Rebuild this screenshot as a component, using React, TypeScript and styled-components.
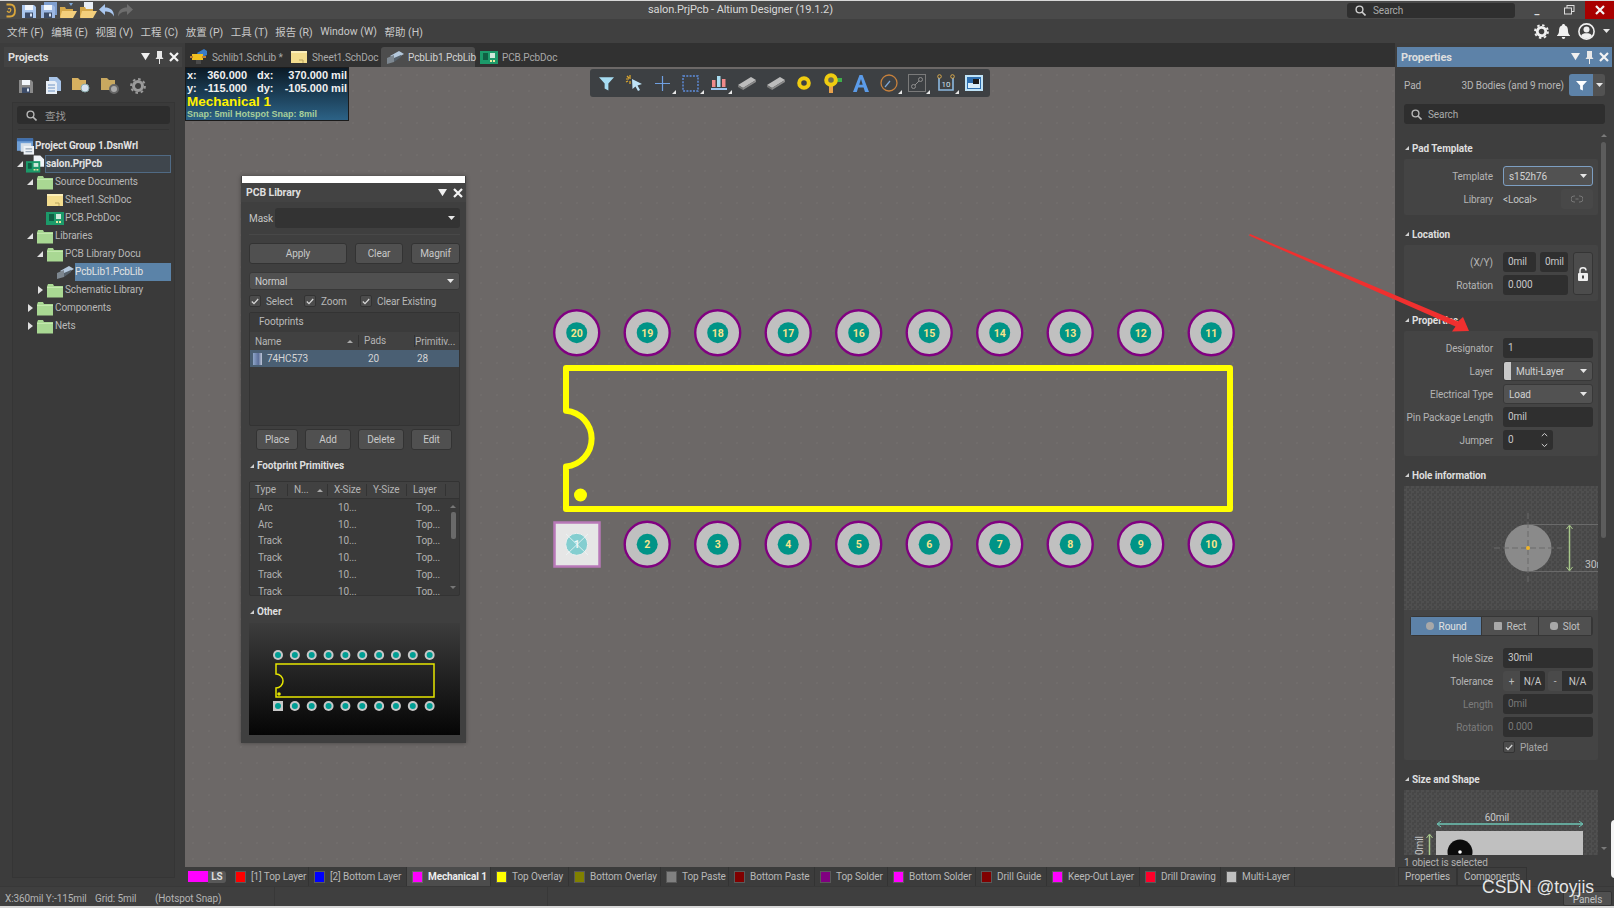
import { FC, ReactNode } from 'react';
import styled, { createGlobalStyle } from 'styled-components';

const FONT = `Roboto, "Noto Sans CJK SC", "Liberation Sans", sans-serif`;

const GlobalSC = createGlobalStyle`
  html, body { margin: 0; padding: 0; background: #d8d8d8; }
  body { font-family: ${FONT}; font-size: 10px; letter-spacing: -0.1px; color: #c4c4c4; }
  * { box-sizing: border-box; }
`;

// ---- small drawings ----
const Tri: FC<{ size?: number; color?: string }> = ({ size = 9, color = '#f0f0f0' }) => (
  <svg width={size} height={size * 0.8} viewBox="0 0 10 8"><path d="M0 0H10L5 8Z" fill={color} /></svg>
);
const Pin: FC = () => (
  <svg width="9" height="13" viewBox="0 0 9 13"><path d="M2 0H7V6L8.5 8H5V13H4V8H.5L2 6Z" fill="#e8e8e8" /></svg>
);
const CloseX: FC = () => (
  <svg width="10" height="10" viewBox="0 0 10 10"><path d="M1 1L9 9M9 1L1 9" stroke="#f4f4f4" strokeWidth="2.2" /></svg>
);
const Loupe: FC<{ color?: string }> = ({ color = '#b8b8b8' }) => (
  <svg width="11" height="11" viewBox="0 0 11 11" fill="none"><circle cx="4.5" cy="4.5" r="3.4" stroke={color} strokeWidth="1.4" /><path d="M7 7L10.5 10.5" stroke={color} strokeWidth="1.6" /></svg>
);
const Caret: FC = () => (
  <svg width="7" height="4" viewBox="0 0 7 4"><path d="M0 0H7L3.5 4Z" fill="#e6e6e6" /></svg>
);
const Tick: FC = () => (
  <svg width="8" height="7" viewBox="0 0 8 7" fill="none"><path d="M.8 3.5L3 5.7L7.2 1" stroke="#d8d8d8" strokeWidth="1.2" /></svg>
);
const SortUp: FC = () => (
  <svg width="6" height="3" viewBox="0 0 6 3"><path d="M0 3H6L3 0Z" fill="#aaa" /></svg>
);
const FilterGlyph: FC<{ size?: number; color?: string }> = ({ size = 12, color = '#fff' }) => (
  <svg width={size} height={size} viewBox="0 0 12 12"><path d="M0 1H12L7.5 6V11.5L4.5 10V6Z" fill={color} /></svg>
);

const Folder: FC = () => (
  <svg width="18" height="15" viewBox="0 0 18 15"><path d="M1 3.5L2 1H7L8 3H17V14.500H1Z" fill="#a9d893" /><path d="M1 4H17V5H1Z" fill="#c3e8ae" /></svg>
);
const SchDocIcon: FC = () => (
  <svg width="18" height="14" viewBox="0 0 18 14"><rect x="1" y="1" width="16" height="12" fill="#f3dd8e" /><rect x="1" y="1" width="16" height="2" fill="#fbeeb9" /><path d="M9 10H13V13" stroke="#b9a45e" fill="none" /></svg>
);
const PcbDocIcon: FC = () => (
  <svg width="18" height="14" viewBox="0 0 18 14"><rect x="0" y="1" width="18" height="13" fill="#1c9a6a" /><rect x="3" y="3" width="5" height="7" fill="#0f5f43" /><rect x="10" y="3" width="5" height="5" fill="#cfe9db" /><path d="M10 11H16" stroke="#e7e7a0" strokeWidth="2" strokeDasharray="2 1" /></svg>
);
const PcbLibIcon: FC = () => (
  <svg width="18" height="15" viewBox="0 0 18 15"><path d="M4 6L13 1L18 4L9 9Z" fill="#b4c8dc" /><path d="M1 8L8 5L8 12L1 14Z" fill="#7d8790" /><path d="M8 8L15 5V7L8 12Z" fill="#56616b" /></svg>
);
const ProjectIcon: FC = () => (
  <svg width="20" height="18" viewBox="0 0 20 18"><path d="M8 0H15L19 4V12H8Z" fill="#f0f4f8" /><rect x="0" y="6" width="15" height="12" fill="#1c9a6a" /><rect x="2" y="8" width="4" height="6" fill="#0f5f43" /><rect x="8" y="8" width="5" height="4" fill="#cfe9db" /><path d="M8 15H14" stroke="#e7e7a0" strokeWidth="1.600" strokeDasharray="2 1" /></svg>
);
const GroupIcon: FC = () => (
  <svg width="20" height="19" viewBox="0 0 20 19"><rect x="1" y="1" width="17" height="13" fill="#6f9fd6" /><rect x="1" y="1" width="17" height="3" fill="#3e6fb0" /><rect x="5" y="6" width="11" height="9" fill="#d6dfe8" /><rect x="8" y="9" width="11" height="9" fill="#eef2f6" /><path d="M10 12H17M10 15H17" stroke="#7d8ea0" /></svg>
);
const SchLibIcon: FC = () => (
  <svg width="18" height="16" viewBox="0 0 18 16"><path d="M7 4L14 0L17 2V6L10 9Z" fill="#3a7cc8" /><rect x="2" y="5" width="11" height="6" fill="#f0c020" /><path d="M0 8H3M12 8H16" stroke="#c08030" strokeWidth="2" /><rect x="6" y="11" width="5" height="4" fill="#4a4a4a" /></svg>
);
const SaveIcon: FC<{ color?: string; double?: boolean }> = ({ color = '#a9c6ee', double }) => (
  <svg width="17" height="17" viewBox="0 0 17 17">
    {double && <rect x="4" y="0" width="13" height="13" fill="#7f9fd0" />}
    <path d="M1 3H13L15 5V16H1Z" fill={color} />
    <rect x="4" y="3" width="8" height="5" fill="#f2f6fb" />
    <rect x="4" y="10.500" width="8" height="5.500" fill="#3d4c68" />
    <rect x="9" y="11.500" width="2" height="3" fill="#d8e2f0" />
  </svg>
);
const OpenIcon: FC<{ paper?: boolean }> = ({ paper }) => (
  <svg width="18" height="17" viewBox="0 0 18 17">
    {paper && <path d="M5 0H14V8H5Z" fill="#e8eef6" />}
    <path d="M1 5H6L7 7H14V15H1Z" fill="#d6a84a" />
    <path d="M3 9H18L14 16H1Z" fill="#f4cf7c" />
    {!paper && <path d="M10 1L14 1L12 4Z" fill="#7fa8d8" />}
  </svg>
);
const Undo: FC<{ color: string; flip?: boolean }> = ({ color, flip }) => (
  <svg width="16" height="13" viewBox="0 0 16 13" style={flip ? { transform: 'scaleX(-1)' } : undefined}>
    <path d="M6 0V3.500C11 3.500 15 6 15 12.500C13 8.500 10 7.500 6 7.500V11L0 5.500Z" fill={color} />
  </svg>
);
const AppLogo: FC = () => (
  <svg width="11" height="15" viewBox="0 0 11 15" fill="none"><path d="M1.500 1.500H5C9 1.500 10 4 10 7.500C10 11 9 13.500 5 13.500H1.500" stroke="#d9a63c" strokeWidth="1.800" /><path d="M3 6C5 4.500 6.500 6 5.500 8S3.500 9.500 2 8" stroke="#d9a63c" strokeWidth="1.300" /></svg>
);
const Gear: FC<{ color?: string; size?: number }> = ({ color = '#f0f0f0', size = 15 }) => (
  <svg width={size} height={size} viewBox="0 0 16 16"><circle cx="8" cy="8" r="4.500" fill="none" stroke={color} strokeWidth="3" /><circle cx="8" cy="8" r="6.900" fill="none" stroke={color} strokeWidth="2" strokeDasharray="2.600 2.800" /></svg>
);
const Bell: FC = () => (
  <svg width="13" height="15" viewBox="0 0 13 15"><path d="M6.500 0C7.500 0 8 .6 8 1.500C10.500 2.300 11 4.500 11 7C11 9 12 10.500 13 11.500V12H0V11.500C1 10.500 2 9 2 7C2 4.500 2.500 2.300 5 1.500C5 .6 5.500 0 6.500 0Z" fill="#f0f0f0" /><path d="M4.800 13H8.200C8.200 14 7.500 15 6.500 15S4.800 14 4.800 13Z" fill="#f0f0f0" /></svg>
);
const UserIcon: FC = () => (
  <svg width="17" height="17" viewBox="0 0 17 17"><circle cx="8.500" cy="8.500" r="7.600" fill="none" stroke="#f0f0f0" strokeWidth="1.600" /><circle cx="8.500" cy="6.500" r="3" fill="#f0f0f0" /><path d="M3 13C4 10.800 6 10.300 8.500 10.300S13 10.800 14 13C12.500 14.700 10.500 15.500 8.500 15.500S4.500 14.700 3 13Z" fill="#f0f0f0" /></svg>
);
const Lock: FC = () => (
  <svg width="10" height="14" viewBox="0 0 10 14"><path d="M2 6V3.500C2 1.800 3.300.8 5 .8S8 1.800 8 3.500" fill="none" stroke="#efefef" strokeWidth="1.500" /><rect x="0" y="6" width="10" height="8" rx="1" fill="#efefef" /><rect x="4" y="8.500" width="2" height="3" fill="#444" /></svg>
);

const ChipIcon: FC = () => (
  <svg width="20" height="14" viewBox="0 0 20 14"><path d="M1 9L14 1L19 4L6 12Z" fill="#bcbcbc" /><path d="M1 9L6 12V14L1 11Z" fill="#777" /><path d="M6 12L19 4V6L6 14Z" fill="#8a8a8a" /></svg>
);

const TOOL_ICONS: ReactNode[] = [
  <FilterGlyph size={15} color="#a6dcf2" />,
  <svg width="18" height="18" viewBox="0 0 18 18"><path d="M7 5L17 10L12.500 11.500L15 16L13 17L10.500 12.500L7.500 15Z" fill="#bfe3f7" /><path d="M5 1V5M1 5H4M2 2L4 4M1 8L3 7M5 7V10" stroke="#e0a92e" strokeWidth="1.200" /></svg>,
  <svg width="15" height="15" viewBox="0 0 15 15"><path d="M7.500 0V15M0 7.500H15" stroke="#6f9fe0" strokeWidth="1.200" /></svg>,
  <svg width="17" height="17" viewBox="0 0 17 17"><rect x="1" y="1" width="15" height="15" fill="none" stroke="#5f8fe0" strokeWidth="1.400" strokeDasharray="2 1.300" /></svg>,
  <svg width="16" height="16" viewBox="0 0 16 16"><rect x="1" y="5" width="3.500" height="7" fill="#f08a8a" /><rect x="6" y="1" width="3.500" height="11" fill="#a8dcf0" /><rect x="11" y="4" width="3.500" height="8" fill="#f08a8a" /><rect x="0" y="13" width="16" height="2" fill="#9cc4ee" /></svg>,
  <ChipIcon />,
  <ChipIcon />,
  <svg width="14" height="14" viewBox="0 0 14 14"><circle cx="7" cy="7" r="4.800" fill="none" stroke="#f0cc10" strokeWidth="4" /></svg>,
  <svg width="19" height="20" viewBox="0 0 19 20"><rect x="6" y="11" width="4" height="9" fill="#e8a24c" /><rect x="11" y="5" width="8" height="4" fill="#3fae4a" /><circle cx="8" cy="7" r="4.800" fill="#6a6a50" stroke="#f0cc10" strokeWidth="4" /></svg>,
  <svg width="16" height="17" viewBox="0 0 16 17"><path d="M6.500 0H9.500L16 17H12L10.600 12.500H5.200L3.800 17H0ZM6.200 9.800H9.700L8 4Z" fill="#5b9be8" /></svg>,
  <svg width="18" height="18" viewBox="0 0 18 18" fill="none"><circle cx="9" cy="9" r="8" stroke="#c8813c" strokeWidth="1.300" /><path d="M5 13L10 7" stroke="#7fa8d8" strokeWidth="1.200" /></svg>,
  <svg width="18" height="18" viewBox="0 0 18 18" fill="none"><rect x=".5" y=".5" width="17" height="17" stroke="#7a7a7a" /><circle cx="5.500" cy="12.500" r="2" stroke="#8e8e8e" /><circle cx="12.500" cy="5.500" r="2" stroke="#8e8e8e" /><path d="M7 11L11 7" stroke="#8e8e8e" /></svg>,
  <svg width="18" height="18" viewBox="0 0 18 18" fill="none"><path d="M2 4V16H16V4" stroke="#8cb8e0" strokeWidth="1.600" /><circle cx="2.500" cy="2.500" r="1.800" stroke="#d8a84c" /><circle cx="15.500" cy="2.500" r="1.800" stroke="#d8a84c" /><text x="9" y="13" fontSize="8" fill="#cfe0ee" textAnchor="middle" fontFamily="Roboto">10</text></svg>,
  <svg width="18" height="16" viewBox="0 0 18 16"><rect width="18" height="16" fill="#bfe3f7" /><rect x="2" y="2" width="14" height="12" fill="#2e6fb0" /><path d="M3 13V8H9V4H15V13Z" fill="#d8eefb" /><rect x="8" y="4" width="6" height="5" fill="#1d1d1d" /></svg>,
];

// ---- data ----
type DocKind = 'group' | 'prj' | 'folder' | 'sch' | 'pcb' | 'lib';
const KIND_ICON: Record<DocKind, ReactNode> = {
  group: <GroupIcon />, prj: <ProjectIcon />, folder: <Folder />, sch: <SchDocIcon />, pcb: <PcbDocIcon />, lib: <PcbLibIcon />,
};
const tree: { name: string; level: number; kind: DocKind; twisty?: 'open' | 'closed'; sel?: 'dim' | 'blue'; bold?: boolean }[] = [
  { name: 'Project Group 1.DsnWrl', level: 0, kind: 'group', bold: true },
  { name: 'salon.PrjPcb', level: 1, kind: 'prj', twisty: 'open', sel: 'dim', bold: true },
  { name: 'Source Documents', level: 2, kind: 'folder', twisty: 'open' },
  { name: 'Sheet1.SchDoc', level: 3, kind: 'sch' },
  { name: 'PCB.PcbDoc', level: 3, kind: 'pcb' },
  { name: 'Libraries', level: 2, kind: 'folder', twisty: 'open' },
  { name: 'PCB Library Docu', level: 3, kind: 'folder', twisty: 'open' },
  { name: 'PcbLib1.PcbLib', level: 4, kind: 'lib', sel: 'blue' },
  { name: 'Schematic Library', level: 3, kind: 'folder', twisty: 'closed' },
  { name: 'Components', level: 2, kind: 'folder', twisty: 'closed' },
  { name: 'Nets', level: 2, kind: 'folder', twisty: 'closed' },
];

const docTabs: { name: string; icon: ReactNode; width: number; active?: boolean }[] = [
  { name: 'Schlib1.SchLib *', icon: <SchLibIcon />, width: 100 },
  { name: 'Sheet1.SchDoc', icon: <SchDocIcon />, width: 96 },
  { name: 'PcbLib1.PcbLib', icon: <PcbLibIcon />, width: 94, active: true },
  { name: 'PCB.PcbDoc', icon: <PcbDocIcon />, width: 90 },
];

const layers = [
  { name: '[1] Top Layer', color: '#ff0000', w: 79 },
  { name: '[2] Bottom Layer', color: '#0000ff', w: 98 },
  { name: 'Mechanical 1', color: '#ff00ff', w: 84, active: true },
  { name: 'Top Overlay', color: '#ffff00', w: 78 },
  { name: 'Bottom Overlay', color: '#808000', w: 92 },
  { name: 'Top Paste', color: '#808080', w: 68 },
  { name: 'Bottom Paste', color: '#800000', w: 86 },
  { name: 'Top Solder', color: '#800080', w: 73 },
  { name: 'Bottom Solder', color: '#ff00ff', w: 88 },
  { name: 'Drill Guide', color: '#800000', w: 71 },
  { name: 'Keep-Out Layer', color: '#ff00ff', w: 93 },
  { name: 'Drill Drawing', color: '#ff002a', w: 81 },
  { name: 'Multi-Layer', color: '#c0c0c0', w: 74 },
];

const menu = ['文件 (F)', '编辑 (E)', '视图 (V)', '工程 (C)', '放置 (P)', '工具 (T)', '报告 (R)', 'Window (W)', '帮助 (H)'];
const primitives = ['Arc', 'Arc', 'Track', 'Track', 'Track', 'Track'];

const PAD_X = (i: number) => 576.7 + i * 70.5;
const MINI_X = (i: number) => 278 + i * 16.85;

const App: FC = () => (
  <PageSC>
    <GlobalSC />
    <TitleBarSC>
      <QuickIconsSC>
        <AppLogo />
        <SaveIcon />
        <SaveIcon double color="#9db8e4" />
        <OpenIcon />
        <OpenIcon paper />
        <Undo color="#a9c6ee" />
        <Undo color="#6e6e6e" flip />
      </QuickIconsSC>
      <TitleTextSC>salon.PrjPcb - Altium Designer (19.1.2)</TitleTextSC>
      <GlobalSearchSC><Loupe color="#d0d0d0" /><span>Search</span></GlobalSearchSC>
      <WinButtonSC>_</WinButtonSC>
      <WinButtonSC>
        <svg width="11" height="10" viewBox="0 0 11 10" fill="none"><rect x="3" y=".5" width="7" height="6" stroke="#ddd" /><rect x=".5" y="3" width="7" height="6" fill="#4a4a4a" stroke="#ddd" /></svg>
      </WinButtonSC>
      <WinCloseSC><CloseX /></WinCloseSC>
    </TitleBarSC>

    <MenuBarSC>
      {menu.map(m => <MenuItemSC key={m}>{m}</MenuItemSC>)}
      <MenuRightSC>
        <Gear />
        <Bell />
        <UserIcon />
        <Caret />
      </MenuRightSC>
    </MenuBarSC>

    <MainSC>
      <LeftPanelSC>
        <PanelHeadSC>
          <PanelTitleSC>Projects</PanelTitleSC>
          <Tri />
          <Pin />
          <CloseX />
        </PanelHeadSC>
        <ProjectToolsSC>
          <SaveIcon color="#8a8a8a" />
          <svg width="15" height="17" viewBox="0 0 15 17"><path d="M3 0H11L15 4V14H3Z" fill="#a8c4e8" /><path d="M0 4H9L11 6V17H0Z" fill="#e8eef6" /><path d="M2 8H9M2 11H9M2 14H9" stroke="#6f94c4" /></svg>
          <svg width="18" height="17" viewBox="0 0 18 17"><path d="M0 1H6L8 3H14V13H0Z" fill="#d6b060" /><circle cx="13" cy="11" r="4" fill="#d8e4f0" stroke="#8aa" /></svg>
          <svg width="18" height="17" viewBox="0 0 18 17"><path d="M0 1H6L8 3H14V13H0Z" fill="#c8a860" /><circle cx="13" cy="12" r="4" fill="#aaa" stroke="#666" strokeWidth="2" /></svg>
          <Gear color="#9a9a9a" size={16} />
        </ProjectToolsSC>
        <TreeAreaSC>
          <PanelSearchSC><Loupe /><span>查找</span></PanelSearchSC>
          <TreeDividerSC />
          <TreeSC>
            {tree.map(n => (
              <TreeRowSC key={n.name} $level={n.level}>
                {n.level > 0 && (
                  <TwistySC>
                    {n.twisty === 'open' && <svg width="6" height="6" viewBox="0 0 6 6"><path d="M6 0V6H0Z" fill="#e0e0e0" /></svg>}
                    {n.twisty === 'closed' && <svg width="5" height="8" viewBox="0 0 5 8"><path d="M0 0L5 4L0 8Z" fill="#e0e0e0" /></svg>}
                  </TwistySC>
                )}
                <TreeIconSC>{KIND_ICON[n.kind]}</TreeIconSC>
                <TreeNameSC $sel={n.sel} $bold={n.bold}>{n.name}</TreeNameSC>
              </TreeRowSC>
            ))}
          </TreeSC>
        </TreeAreaSC>
      </LeftPanelSC>

      <CenterSC>
        <DocTabsSC>
          {docTabs.map(t => (
            <DocTabSC key={t.name} $active={t.active} $w={t.width}>{t.icon}<span>{t.name}</span></DocTabSC>
          ))}
        </DocTabsSC>

        <CanvasSC>
          <BoardSvgSC viewBox="185 67 1210 800">
            {[20, 19, 18, 17, 16, 15, 14, 13, 12, 11].map((num, i) => (
              <g key={num}>
                <circle cx={PAD_X(i)} cy={332.700} r={22.500} fill="#c0c0c0" stroke="#800080" strokeWidth={2.400} />
                <circle cx={PAD_X(i)} cy={332.700} r={10.500} fill="#009487" />
                <PadTextSC x={PAD_X(i)} y={336.500} textAnchor="middle">{num}</PadTextSC>
              </g>
            ))}
            <rect x={554.500} y={522.500} width={45} height={44} fill="#e6e6e6" stroke="#b878b8" strokeWidth={2.500} />
            <circle cx={576.700} cy={544.300} r={11} fill="#84ced0" stroke="#f0f0f0" strokeWidth={1} />
            <path d="M566 534L588 555M588 534L566 555" stroke="#eef6f6" strokeWidth={0.800} />
            <PadTextSC x={576.700} y={548} textAnchor="middle" $light>1</PadTextSC>
            {[2, 3, 4, 5, 6, 7, 8, 9, 10].map((num, i) => (
              <g key={num}>
                <circle cx={PAD_X(i + 1)} cy={544.300} r={22.500} fill="#c0c0c0" stroke="#800080" strokeWidth={2.400} />
                <circle cx={PAD_X(i + 1)} cy={544.300} r={10.500} fill="#009487" />
                <PadTextSC x={PAD_X(i + 1)} y={548} textAnchor="middle">{num}</PadTextSC>
              </g>
            ))}
            <path d="M566 368H1230V509H566V466.500A28 28 0 0 0 566 410.700Z" fill="none" stroke="#ffff00" strokeWidth={6} strokeLinejoin="round" />
            <circle cx={580.500} cy={495} r={6.500} fill="#ffff00" />
          </BoardSvgSC>

          <HudSC>
            <HudCoordsSC>
              <span>x:</span><HudNumSC>360.000</HudNumSC><HudKeySC>dx:</HudKeySC><HudNumSC>370.000 mil</HudNumSC>
              <span>y:</span><HudNumSC>-115.000</HudNumSC><HudKeySC>dy:</HudKeySC><HudNumSC>-105.000 mil</HudNumSC>
            </HudCoordsSC>
            <HudLayerSC>Mechanical 1</HudLayerSC>
            <HudSnapSC>Snap: 5mil Hotspot Snap: 8mil</HudSnapSC>
          </HudSC>

          <ToolbarSC>
            {TOOL_ICONS.map((icon, i) => (
              <ToolButtonSC key={i} $corner={[2, 3, 4, 10, 11, 12].includes(i)}>{icon}</ToolButtonSC>
            ))}
          </ToolbarSC>

          <LibraryPanelSC>
            <LibraryStripSC />
            <PanelHeadSC $flat>
              <PanelTitleSC $small>PCB Library</PanelTitleSC>
              <Tri />
              <CloseX />
            </PanelHeadSC>
            <LibraryBodySC>
              <MaskRowSC>
                <MaskLabelSC>Mask</MaskLabelSC>
                <MaskInputSC><Caret /></MaskInputSC>
              </MaskRowSC>
              <LibDividerSC />
              <ButtonRowSC>
                <LibButtonSC $w={98}>Apply</LibButtonSC>
                <LibButtonSC $w={48}>Clear</LibButtonSC>
                <LibButtonSC $w={49}>Magnif</LibButtonSC>
              </ButtonRowSC>
              <NormalSelectSC><span>Normal</span><Caret /></NormalSelectSC>
              <CheckRowSC>
                <CheckSC $w={55}><CheckBoxSC><Tick /></CheckBoxSC>Select</CheckSC>
                <CheckSC $w={56}><CheckBoxSC><Tick /></CheckBoxSC>Zoom</CheckSC>
                <CheckSC><CheckBoxSC><Tick /></CheckBoxSC>Clear Existing</CheckSC>
              </CheckRowSC>

              <FootprintsSC>
                <FootprintsTitleSC>Footprints</FootprintsTitleSC>
                <FootHeadSC>
                  <span>Name</span>
                  <SortCellSC><SortUp /></SortCellSC>
                  <PadsHeadSC>Pads</PadsHeadSC>
                  <span>Primitiv...</span>
                </FootHeadSC>
                <FootRowSC>
                  <ChipMarkSC />
                  <span>74HC573</span>
                  <span>20</span>
                  <span>28</span>
                </FootRowSC>
              </FootprintsSC>

              <ActionRowSC>
                <LibButtonSC $w={42}>Place</LibButtonSC>
                <LibButtonSC $w={46}>Add</LibButtonSC>
                <LibButtonSC $w={46}>Delete</LibButtonSC>
                <LibButtonSC $w={41}>Edit</LibButtonSC>
              </ActionRowSC>

              <SectionHeadSC $tall={31}><HeadTriSC />Footprint Primitives</SectionHeadSC>
              <PrimTableSC>
                <PrimHeadSC>
                  <span>Type</span>
                  <PrimSortSC>N...<SortUp /></PrimSortSC>
                  <span>X-Size</span>
                  <span>Y-Size</span>
                  <span>Layer</span>
                </PrimHeadSC>
                {primitives.map((p, i) => (
                  <PrimRowSC key={i}><span>{p}</span><span /><span>10...</span><span /><span>Top...</span></PrimRowSC>
                ))}
                <PrimScrollSC />
              </PrimTableSC>

              <SectionHeadSC $tall={27} $drop={4}><HeadTriSC />Other</SectionHeadSC>
              <MiniPreviewSC>
                <svg width="210" height="112" viewBox="249 623 210 112">
                  {Array.from({ length: 10 }).map((_, i) => (
                    <g key={i}>
                      <circle cx={MINI_X(i)} cy={655} r={5} fill="#c8c8c8" />
                      <circle cx={MINI_X(i)} cy={655} r={3} fill="#009e94" />
                      {i === 0
                        ? <rect x={273} y={701} width={10} height={10} fill="#c8c8c8" />
                        : <circle cx={MINI_X(i)} cy={706} r={5} fill="#c8c8c8" />}
                      <circle cx={MINI_X(i)} cy={706} r={3} fill="#009e94" />
                    </g>
                  ))}
                  <path d="M276 664H434V697H276V688A6.500 6.500 0 0 0 276 674Z" fill="none" stroke="#e6e600" strokeWidth={1.500} />
                  <circle cx={279} cy={694} r={1.800} fill="#e6e600" />
                </svg>
              </MiniPreviewSC>
            </LibraryBodySC>
          </LibraryPanelSC>
        </CanvasSC>

        <LayerBarSC>
          <LayerSwatchBigSC />
          <LsTagSC>LS</LsTagSC>
          {layers.map(l => (
            <LayerTabSC key={l.name} $w={l.w} $active={l.active}>
              <LayerChipSC $color={l.color} />
              <span>{l.name}</span>
            </LayerTabSC>
          ))}
        </LayerBarSC>
      </CenterSC>

      <RightPanelSC>
        <PanelHeadSC $blue>
          <PanelTitleSC>Properties</PanelTitleSC>
          <Tri />
          <Pin />
          <CloseX />
        </PanelHeadSC>
        <SelectionRowSC>
          <span>Pad</span>
          <SelectionHintSC>3D Bodies (and 9 more)</SelectionHintSC>
          <FilterBtnSC><FilterGlyph size={11} /></FilterBtnSC>
          <FilterCaretSC><Caret /></FilterCaretSC>
        </SelectionRowSC>
        <PropSearchSC><Loupe /><span>Search</span></PropSearchSC>

        <PropScrollSC>
          <SectionHeadSC $tall={22}><HeadTriSC />Pad Template</SectionHeadSC>
          <GroupSC>
            <FieldSC><label>Template</label><SelectSC $focus><span>s152h76</span><Caret /></SelectSC></FieldSC>
            <FieldSC>
              <label>Library</label>
              <LibraryValueSC>
                <span>&lt;Local&gt;</span>
                <LinkBtnSC>
                  <svg width="12" height="8" viewBox="0 0 12 8" fill="none"><path d="M4 1H3A3 3 0 0 0 3 7H4M8 1H9A3 3 0 0 1 9 7H8M4.500 4H7.500" stroke="#777" /></svg>
                </LinkBtnSC>
              </LibraryValueSC>
            </FieldSC>
          </GroupSC>

          <SectionHeadSC $tall={22} $gap={8}><HeadTriSC />Location</SectionHeadSC>
          <GroupSC>
            <LocationWrapSC>
              <LocationRowsSC>
                <FieldSC $compact>
                  <label>(X/Y)</label>
                  <PairSC><InputSC $w={33}>0mil</InputSC><InputSC $w={28}>0mil</InputSC></PairSC>
                </FieldSC>
                <FieldSC $compact><label>Rotation</label><InputSC $w={65}>0.000</InputSC></FieldSC>
              </LocationRowsSC>
              <LockBtnSC><Lock /></LockBtnSC>
            </LocationWrapSC>
          </GroupSC>

          <SectionHeadSC $tall={22} $gap={8}><HeadTriSC />Properties</SectionHeadSC>
          <GroupSC>
            <FieldSC><label>Designator</label><InputSC>1</InputSC></FieldSC>
            <FieldSC>
              <label>Layer</label>
              <SelectSC $chip><LayerTagSC /><span>Multi-Layer</span><Caret /></SelectSC>
            </FieldSC>
            <FieldSC><label>Electrical Type</label><SelectSC><span>Load</span><Caret /></SelectSC></FieldSC>
            <FieldSC><label>Pin Package Length</label><InputSC>0mil</InputSC></FieldSC>
            <FieldSC>
              <label>Jumper</label>
              <InputSC $w={50}>
                0
                <SpinnerSC>
                  <svg width="7" height="16" viewBox="0 0 7 16" fill="none"><path d="M.8 4L3.500 1.500L6.200 4M.8 12L3.500 14.500L6.200 12" stroke="#cfcfcf" /></svg>
                </SpinnerSC>
              </InputSC>
            </FieldSC>
          </GroupSC>

          <SectionHeadSC $tall={22} $gap={8}><HeadTriSC />Hole information</SectionHeadSC>
          <GroupSC $flush>
            <CheckerSC $h={124}>
              <svg width="194" height="124" viewBox="1404 486 194 124" fontFamily={FONT}>
                <circle cx={1528} cy={548} r={23.500} fill="#8a8a8a" />
                <path d="M1528 513V583M1494 548H1562" stroke="#6a6a6a" strokeDasharray="6 3" />
                <path d="M1528 524.500H1598M1528 571.500H1598" stroke="#6a6a6a" />
                <circle cx={1528} cy={548} r={2} fill="#f0b428" />
                <path d="M1569.500 526V570" stroke="#a8c88a" strokeWidth={1.500} />
                <path d="M1566.500 529L1569.500 525L1572.500 529M1566.500 567L1569.500 571L1572.500 567" stroke="#a8c88a" fill="none" />
                <text x={1585} y={568} fontSize={10.500} fill="#c0c0c0">30mil</text>
              </svg>
            </CheckerSC>
            <SegmentSC>
              <SegButtonSC $w={72} $active><SegDotSC $round />Round</SegButtonSC>
              <SegButtonSC $w={57}><SegDotSC />Rect</SegButtonSC>
              <SegButtonSC $w={54}><SegDotSC $round $soft />Slot</SegButtonSC>
            </SegmentSC>
            <HoleFieldsSC>
              <FieldSC><label>Hole Size</label><InputSC>30mil</InputSC></FieldSC>
              <FieldSC>
                <label>Tolerance</label>
                <ToleranceSC>
                  <TolSignSC>+</TolSignSC><TolValueSC>N/A</TolValueSC>
                  <TolSignSC>-</TolSignSC><TolValueSC>N/A</TolValueSC>
                </ToleranceSC>
              </FieldSC>
              <FieldSC $muted><label>Length</label><InputSC $muted>0mil</InputSC></FieldSC>
              <FieldSC $muted><label>Rotation</label><InputSC $muted>0.000</InputSC></FieldSC>
              <FieldSC $short>
                <span />
                <PlatedSC><CheckBoxSC><Tick /></CheckBoxSC>Plated</PlatedSC>
              </FieldSC>
            </HoleFieldsSC>
          </GroupSC>

          <SectionHeadSC $tall={22} $gap={8}><HeadTriSC />Size and Shape</SectionHeadSC>
          <CheckerSC $h={65}>
            <svg width="194" height="65" viewBox="1404 790 194 65" fontFamily={FONT}>
              <text x={1497} y={821} fontSize={10} fill="#c8c8c8" textAnchor="middle">60mil</text>
              <path d="M1438 824H1582" stroke="#6cc4b4" strokeWidth={1.500} />
              <path d="M1441 821L1437 824L1441 827M1579 821L1583 824L1579 827" stroke="#6cc4b4" fill="none" />
              <rect x={1436} y={831} width={147} height={30} fill="#c0c0c0" />
              <circle cx={1460} cy={852} r={12.500} fill="#0c0c0c" />
              <circle cx={1460} cy={852} r={1.800} fill="#fff" />
              <path d="M1429.500 835V855" stroke="#a8c88a" strokeWidth={1.500} />
              <path d="M1426.500 838L1429.500 834L1432.500 838" stroke="#a8c88a" fill="none" />
              <text transform="translate(1423 855) rotate(-90)" fontSize={10} fill="#c8c8c8">0mil</text>
            </svg>
          </CheckerSC>
        </PropScrollSC>

        <SelectedCountSC>1 object is selected</SelectedCountSC>
        <PanelTabsSC>
          <PanelTabSC>Properties</PanelTabSC>
          <PanelTabSC>Components</PanelTabSC>
        </PanelTabsSC>

        <PropArrowSC />
        <PropArrowSC $down />
        <PropScrollbarSC />
      </RightPanelSC>
    </MainSC>

    <StatusBarSC>
      <StatusCellSC $w={275}>
        <StatusTextSC $w={90}>X:360mil Y:-115mil</StatusTextSC>
        <StatusTextSC $w={60}>Grid: 5mil</StatusTextSC>
        <StatusTextSC>(Hotspot Snap)</StatusTextSC>
      </StatusCellSC>
      <StatusCellSC $w={273} />
      <PanelsBtnSC>Panels</PanelsBtnSC>
    </StatusBarSC>

    <ArrowSC width="240" height="110" viewBox="1240 228 240 110">
      <polygon points="1250,234 1458,321.500 1463,317 1469,331 1452,331.500 1455.500,326.500 1249,235.500" fill="#f0302f" />
    </ArrowSC>
    <SliverSC />
    <WatermarkSC>CSDN @toyjis</WatermarkSC>
  </PageSC>
);

export default App;

const PageSC = styled('div')`
  position: relative;
  width: 1614px;
  height: 908px;
  overflow: hidden;
  padding: 1px 0 2px;
  background: #d8d8d8;
  display: flex;
  flex-direction: column;
`;

// ---- title + menu ----
const TitleBarSC = styled('div')`
  position: relative;
  height: 18px;
  flex: none;
  display: flex;
  align-items: center;
  background: #4a4a4a;
`;
const QuickIconsSC = styled('div')`
  display: flex;
  align-items: center;
  gap: 2px;
  padding-left: 5px;
  width: 140px;
  & > svg:nth-child(1) { margin-right: 3px; }
`;
const TitleTextSC = styled('div')`
  position: absolute;
  left: 648px;
  top: 2px;
  font-size: 11px;
  color: #d8d8d8;
  white-space: nowrap;
`;
const GlobalSearchSC = styled('div')`
  margin-left: auto;
  width: 168px;
  height: 15px;
  margin-right: 10px;
  padding-left: 8px;
  display: flex;
  align-items: center;
  gap: 7px;
  font-size: 10px;
  color: #aaa;
  background: #2f2f2f;
  border-radius: 3px;
`;
const WinButtonSC = styled('div')`
  width: 24px;
  height: 18px;
  margin-right: 8px;
  flex: none;
  display: flex;
  align-items: center;
  justify-content: center;
  color: #ddd;
  font-size: 11px;
  font-weight: 700;
`;
const WinCloseSC = styled('div')`
  width: 29px;
  height: 18px;
  margin-left: -4px;
  flex: none;
  display: flex;
  align-items: center;
  justify-content: center;
  background: #a80000;
`;
const MenuBarSC = styled('div')`
  height: 24px;
  flex: none;
  display: flex;
  align-items: center;
  gap: 7.500px;
  padding: 0 1px 0 7px;
  background: #404040;
`;
const MenuItemSC = styled('div')`
  font-size: 10.500px;
  letter-spacing: 0;
  color: #c9c9c9;
  white-space: nowrap;
`;
const MenuRightSC = styled('div')`
  margin-left: auto;
  display: flex;
  align-items: center;
  gap: 8px;
  padding-right: 3px;
`;

// ---- main ----
const MainSC = styled('div')`
  flex: none;
  height: 843px;
  display: flex;
  background: #3d3d3d;
`;
const LeftPanelSC = styled('div')`
  width: 185px;
  flex: none;
  padding: 4px 3px 0 4px;
  display: flex;
  flex-direction: column;
  background: #3c3c3c;
`;
const PanelHeadSC = styled('div')<{ $blue?: boolean; $flat?: boolean }>`
  height: ${p => (p.$flat ? '19px' : '20px')};
  flex: none;
  display: flex;
  align-items: center;
  gap: ${p => (p.$flat ? '6px' : '5px')};
  padding: 0 3px 0 ${p => (p.$flat ? '5px' : '4px')};
  background: ${p => (p.$blue ? '#5d82a8' : '#434343')};
`;
const PanelTitleSC = styled('div')<{ $small?: boolean }>`
  flex: 1;
  font-size: ${p => (p.$small ? '10.500px' : '11px')};
  font-weight: 700;
  color: #dedede;
`;
const ProjectToolsSC = styled('div')`
  height: 35px;
  flex: none;
  display: flex;
  align-items: center;
  gap: 11px;
  padding: 2px 0 0 14px;
`;
const TreeAreaSC = styled('div')`
  flex: 1;
  margin: 0 7px 8px 8px;
  padding-top: 3px;
  background: #3a3a3a;
  border: 1px solid #353535;
`;
const PanelSearchSC = styled('div')`
  height: 18px;
  margin: 0 4px;
  padding-left: 9px;
  display: flex;
  align-items: center;
  gap: 8px;
  color: #9c9c9c;
  font-size: 10.500px;
  background: #2d2d2d;
  border-radius: 3px;
`;
const TreeDividerSC = styled('div')`
  height: 1px;
  margin: 5px 5px 0;
  background: #333;
`;
const TreeSC = styled('div')`
  margin: 7px 3px 0 -1px;
`;
const TreeRowSC = styled('div')<{ $level: number }>`
  height: 18px;
  display: flex;
  align-items: center;
  padding-left: ${p => 4 + p.$level * 10}px;
`;
const TwistySC = styled('div')`
  width: 8px;
  margin: 0 2px 0 -10px;
  display: flex;
  align-items: center;
  justify-content: center;
`;
const TreeIconSC = styled('div')`
  width: 19px;
  flex: none;
  display: flex;
  align-items: center;
`;
const TreeNameSC = styled('div')<{ $sel?: 'dim' | 'blue'; $bold?: boolean }>`
  flex: ${p => (p.$sel ? 1 : 'none')};
  height: 18px;
  white-space: nowrap;
  font-weight: ${p => (p.$bold ? 700 : 400)};
  color: ${p => (p.$bold || p.$sel ? '#e2e2e2' : '#b8b8b8')};
  background: ${p => (p.$sel === 'blue' ? '#5b83a8' : p.$sel === 'dim' ? '#3f464d' : 'transparent')};
  border: ${p => (p.$sel === 'dim' ? '1px solid #506a84' : 'none')};
  line-height: ${p => (p.$sel === 'dim' ? '15px' : '17px')};
`;

const CenterSC = styled('div')`
  flex: 1;
  min-width: 0;
  display: flex;
  flex-direction: column;
  background: #3d3d3d;
`;
const DocTabsSC = styled('div')`
  height: 24px;
  flex: none;
  display: flex;
  align-items: flex-end;
  background: #313131;
`;
const DocTabSC = styled('div')<{ $active?: boolean; $w: number }>`
  width: ${p => p.$w}px;
  height: 20px;
  flex: none;
  display: flex;
  align-items: center;
  gap: 4px;
  padding-left: 5px;
  border-radius: 3px 3px 0 0;
  white-space: nowrap;
  color: ${p => (p.$active ? '#d4d4d4' : '#a8a8a8')};
  background: ${p => (p.$active ? '#4d4d4d' : 'transparent')};
  & > svg { flex: none; }
`;
const CanvasSC = styled('div')`
  position: relative;
  flex: 1;
  background-color: #6c6867;
  background-image: radial-gradient(circle, #757170 0.6px, transparent 0.8px);
  background-size: 16px 16px;
  overflow: hidden;
`;
const BoardSvgSC = styled('svg')`
  position: absolute;
  left: 0;
  top: 0;
  width: 1210px;
  height: 800px;
`;
const PadTextSC = styled('text')<{ $light?: boolean }>`
  font-family: ${FONT};
  font-size: 10.500px;
  font-weight: 700;
  fill: ${p => (p.$light ? '#f0f8f8' : '#f6e48c')};
`;
const HudSC = styled('div')`
  position: absolute;
  left: 0;
  top: 0;
  width: 164px;
  height: 54px;
  padding: 1px 1px 0 1px;
  font-family: "Liberation Sans", sans-serif;
  font-weight: 700;
  letter-spacing: 0;
  background: linear-gradient(#0b1a26, #2c6286);
  border: 1px solid #1b1b1b;
`;
const HudCoordsSC = styled('div')`
  display: grid;
  grid-template-columns: 16px 44px 37px 1fr;
  font-size: 11px;
  line-height: 12.500px;
  color: #f0f0f0;
`;
const HudKeySC = styled('span')`
  padding-left: 10px;
`;
const HudNumSC = styled('span')`
  text-align: right;
  white-space: nowrap;
`;
const HudLayerSC = styled('div')`
  font-size: 13.500px;
  line-height: 15px;
  color: #fff200;
`;
const HudSnapSC = styled('div')`
  font-size: 9px;
  line-height: 11px;
  color: #a8cf9a;
  white-space: nowrap;
`;
const ToolbarSC = styled('div')`
  position: absolute;
  left: 405px;
  top: 2px;
  width: 400px;
  height: 28px;
  padding: 0 4px;
  display: flex;
  align-items: center;
  justify-content: space-between;
  background: #3d4043;
  border-radius: 3px;
`;
const ToolButtonSC = styled('div')<{ $corner?: boolean }>`
  position: relative;
  width: 24px;
  height: 24px;
  display: flex;
  align-items: center;
  justify-content: center;
  &::after {
    content: '';
    display: ${p => (p.$corner ? 'block' : 'none')};
    position: absolute;
    right: -1px;
    bottom: 1px;
    border-left: 4px solid transparent;
    border-bottom: 4px solid #e8e8e8;
  }
`;

// ---- floating PCB library ----
const LibraryPanelSC = styled('div')`
  position: absolute;
  left: 56px;
  top: 109px;
  width: 225px;
  height: 567px;
  display: flex;
  flex-direction: column;
  background: #3f3f3f;
  box-shadow: 0 0 4px rgba(0, 0, 0, 0.35);
`;
const LibraryStripSC = styled('div')`
  height: 7px;
  flex: none;
  margin: 0 1px;
  background: #fff;
`;
const LibraryBodySC = styled('div')`
  flex: 1;
  padding: 6px 6px 0 8px;
  display: flex;
  flex-direction: column;
`;
const MaskRowSC = styled('div')`
  height: 20px;
  flex: none;
  display: flex;
  align-items: center;
`;
const MaskLabelSC = styled('span')`
  width: 26px;
  flex: none;
`;
const MaskInputSC = styled('div')`
  flex: 1;
  height: 20px;
  padding-right: 5px;
  display: flex;
  align-items: center;
  justify-content: flex-end;
  background: #333;
  border-radius: 3px;
`;
const LibDividerSC = styled('div')`
  height: 1px;
  margin: 6px 0 8px;
  background: #484848;
`;
const ButtonRowSC = styled('div')`
  display: flex;
  gap: 8px;
`;
const LibButtonSC = styled('div')<{ $w: number }>`
  width: ${p => p.$w}px;
  height: 21px;
  display: flex;
  align-items: center;
  justify-content: center;
  color: #c8c8c8;
  background: #505050;
  border: 1px solid #333;
  border-radius: 3px;
`;
const NormalSelectSC = styled('div')`
  height: 18px;
  margin-top: 8px;
  padding: 0 5px;
  display: flex;
  align-items: center;
  justify-content: space-between;
  color: #cdcdcd;
  background: #505050;
  border: 1px solid #383838;
  border-radius: 3px;
`;
const CheckRowSC = styled('div')`
  display: flex;
  height: 22px;
  flex: none;
  align-items: center;
`;
const CheckSC = styled('div')<{ $w?: number }>`
  ${p => (p.$w ? `width: ${p.$w}px;` : '')}
  display: flex;
  align-items: center;
  gap: 5px;
  color: #b8b8b8;
  white-space: nowrap;
`;
const CheckBoxSC = styled('div')`
  width: 12px;
  height: 12px;
  flex: none;
  display: flex;
  align-items: center;
  justify-content: center;
  background: #4c4c4c;
  border: 1px solid #333;
  border-radius: 2px;
`;
const FootprintsSC = styled('div')`
  height: 114px;
  flex: none;
  background: #3a3a3a;
  border: 1px solid #333;
  border-radius: 2px;
`;
const FootprintsTitleSC = styled('div')`
  height: 19px;
  padding-left: 9px;
  line-height: 17px;
  color: #bcbcbc;
  background: #3b3b3b;
`;
const FootHeadSC = styled('div')`
  height: 18px;
  display: grid;
  grid-template-columns: 92px 12px 56px 1fr;
  align-items: center;
  padding-left: 5px;
  color: #b4b4b4;
  background: #414141;
`;
const SortCellSC = styled('span')`
  height: 12px;
  display: flex;
  align-items: center;
  border-right: 1px solid #333;
`;
const PadsHeadSC = styled('span')`
  height: 12px;
  line-height: 12px;
  padding-left: 5px;
  border-right: 1px solid #333;
`;
const FootRowSC = styled('div')`
  height: 17px;
  display: grid;
  grid-template-columns: 15px 101px 49px 1fr;
  align-items: center;
  padding-left: 2px;
  color: #d4d4d4;
  background: #4a5f73;
`;
const ChipMarkSC = styled('div')`
  width: 9px;
  height: 12px;
  margin-left: 1px;
  background: linear-gradient(90deg, #8fa6c8, #5c6f9a 60%, #c0c8d8);
`;
const ActionRowSC = styled('div')`
  display: flex;
  gap: 7px;
  padding-left: 7px;
  margin-top: 3px;
`;
const SectionHeadSC = styled('div')<{ $tall: number; $gap?: number; $drop?: number }>`
  height: ${p => p.$tall}px;
  flex: none;
  margin-top: ${p => p.$gap ?? 0}px;
  padding: ${p => p.$drop ?? 0}px 0 0 1px;
  display: flex;
  align-items: center;
  gap: 3px;
  font-weight: 700;
  font-size: 10px;
  color: #dedede;
`;
const HeadTriSC = styled('span')`
  width: 0;
  height: 0;
  border-left: 4px solid transparent;
  border-bottom: 4px solid #d0d0d0;
`;
const PrimTableSC = styled('div')`
  position: relative;
  height: 115px;
  flex: none;
  overflow: hidden;
  background: #3a3a3a;
  border: 1px solid #333;
  border-radius: 2px;
  &::before, &::after {
    content: '';
    position: absolute;
    right: 3px;
    border-left: 3px solid transparent;
    border-right: 3px solid transparent;
  }
  &::before { top: 23px; border-bottom: 3px solid #777; }
  &::after { bottom: 6px; border-top: 3px solid #777; }
`;
const PrimHeadSC = styled('div')`
  height: 17px;
  display: grid;
  grid-template-columns: 38px 40px 39px 40px 39px 1fr;
  align-items: center;
  color: #b4b4b4;
  background: #414141;
  border-bottom: 1px solid #333;
  & > span {
    height: 12px;
    line-height: 12px;
    padding-left: 6px;
    border-right: 1px solid #333;
    white-space: nowrap;
  }
  & > span:first-child { padding-left: 5px; }
`;
const PrimSortSC = styled('span')`
  display: flex;
  align-items: center;
  justify-content: space-between;
  padding-right: 4px;
`;
const PrimRowSC = styled('div')`
  height: 16.800px;
  display: grid;
  grid-template-columns: 80px 0 78px 0 1fr;
  align-items: center;
  padding-left: 8px;
  color: #b0b0b0;
`;
const PrimScrollSC = styled('div')`
  position: absolute;
  right: 3px;
  top: 30px;
  width: 5px;
  height: 27px;
  border-radius: 2px;
  background: #6a6a6a;
`;
const MiniPreviewSC = styled('div')`
  height: 112px;
  flex: none;
  background: linear-gradient(#3c3c3c, #050505);
  & > svg { display: block; }
`;

// ---- layer bar ----
const LayerBarSC = styled('div')`
  height: 19px;
  flex: none;
  display: flex;
  align-items: center;
  padding-left: 3px;
  background: #3c3c3c;
`;
const LayerSwatchBigSC = styled('div')`
  width: 20px;
  height: 11px;
  background: #ff00ff;
`;
const LsTagSC = styled('div')`
  width: 18px;
  height: 12px;
  margin-right: 4px;
  text-align: center;
  line-height: 12px;
  font-size: 10px;
  font-weight: 700;
  color: #ddd;
  background: #585858;
  border-radius: 0 3px 3px 0;
`;
const LayerTabSC = styled('div')<{ $w: number; $active?: boolean }>`
  width: ${p => p.$w}px;
  height: 19px;
  flex: none;
  display: flex;
  align-items: center;
  gap: 6px;
  padding-left: 6px;
  white-space: nowrap;
  border-right: 1px solid #333;
  font-weight: ${p => (p.$active ? 700 : 400)};
  color: ${p => (p.$active ? '#eee' : '#b8b8b8')};
  background: ${p => (p.$active ? '#4c4c4c' : 'transparent')};
`;
const LayerChipSC = styled('span')<{ $color: string }>`
  width: 9px;
  height: 10px;
  flex: none;
  background: ${p => p.$color};
  box-shadow: 0 0 0 1px rgba(255, 255, 255, 0.15);
`;

// ---- properties ----
const RightPanelSC = styled('div')`
  position: relative;
  width: 219px;
  flex: none;
  padding: 4px 2px 0 2px;
  display: flex;
  flex-direction: column;
  background: #3e3e3e;
`;
const SelectionRowSC = styled('div')`
  height: 22px;
  flex: none;
  margin: 7px 7px 0 7px;
  display: flex;
  align-items: center;
  color: #b8b8b8;
`;
const SelectionHintSC = styled('span')`
  margin-left: auto;
  margin-right: 5px;
`;
const FilterBtnSC = styled('div')`
  width: 24px;
  height: 22px;
  display: flex;
  align-items: center;
  justify-content: center;
  background: #5d82a8;
  border-radius: 3px 0 0 3px;
`;
const FilterCaretSC = styled('div')`
  width: 12px;
  height: 22px;
  display: flex;
  align-items: center;
  justify-content: center;
  background: #525252;
  border-radius: 0 3px 3px 0;
`;
const PropSearchSC = styled('div')`
  height: 20px;
  flex: none;
  margin: 8px 7px 0;
  padding-left: 7px;
  display: flex;
  align-items: center;
  gap: 6px;
  color: #aaa;
  background: #2e2e2e;
  border-radius: 3px;
`;
const PropScrollSC = styled('div')`
  width: 194px;
  height: 718px;
  flex: none;
  margin: 13px 0 0 7px;
  overflow: hidden;
`;
const GroupSC = styled('div')<{ $flush?: boolean }>`
  padding: ${p => (p.$flush ? '0 0 6px' : '7px 0 6px')};
  display: flex;
  flex-direction: column;
  gap: 3px;
  background: #444;
  border-radius: 2px;
`;
const FieldSC = styled('div')<{ $compact?: boolean; $muted?: boolean; $short?: boolean }>`
  display: grid;
  grid-template-columns: 89px 1fr;
  column-gap: 10px;
  align-items: center;
  height: ${p => (p.$short ? '14px' : '20px')};
  padding-right: ${p => (p.$compact ? 0 : '5px')};
  & > label {
    text-align: right;
    white-space: nowrap;
    color: ${p => (p.$muted ? '#7c7c7c' : '#b4b4b4')};
  }
`;
const InputSC = styled('div')<{ $w?: number; $muted?: boolean }>`
  position: relative;
  width: ${p => (p.$w ? `${p.$w}px` : '100%')};
  height: 20px;
  padding-left: 5px;
  line-height: 20px;
  color: ${p => (p.$muted ? '#787878' : '#c8c8c8')};
  background: #2f2f2f;
  border-radius: 3px;
`;
const SpinnerSC = styled('div')`
  position: absolute;
  right: 5px;
  top: 2px;
`;
const SelectSC = styled('div')<{ $focus?: boolean; $chip?: boolean }>`
  height: 20px;
  padding: 0 5px 0 ${p => (p.$chip ? 0 : '5px')};
  display: flex;
  align-items: center;
  color: #d2d2d2;
  background: #525252;
  border: 1px solid ${p => (p.$focus ? '#7d9fc2' : '#383838')};
  border-radius: 3px;
  & > span { flex: 1; }
`;
const LayerTagSC = styled('div')`
  width: 7px;
  height: 18px;
  margin-right: 5px;
  border-radius: 2px 0 0 2px;
  background: #c8c8c8;
`;
const LibraryValueSC = styled('div')`
  display: flex;
  align-items: center;
  justify-content: space-between;
  color: #c4c4c4;
`;
const LinkBtnSC = styled('div')`
  width: 32px;
  height: 20px;
  display: flex;
  align-items: center;
  justify-content: center;
  background: #484848;
  border-radius: 3px;
`;
const LocationWrapSC = styled('div')`
  display: flex;
  gap: 5px;
  padding-right: 5px;
`;
const LocationRowsSC = styled('div')`
  flex: 1;
  display: flex;
  flex-direction: column;
  gap: 3px;
`;
const PairSC = styled('div')`
  display: flex;
  gap: 4px;
`;
const LockBtnSC = styled('div')`
  width: 20px;
  height: 43px;
  display: flex;
  align-items: center;
  justify-content: center;
  background: #4c4c4c;
  border: 1px solid #353535;
  border-radius: 3px;
`;
const CheckerSC = styled('div')<{ $h: number }>`
  height: ${p => p.$h}px;
  overflow: hidden;
  background-color: #474747;
  background-image: conic-gradient(#4f4f4f 25%, transparent 0 50%, #4f4f4f 0 75%, transparent 0);
  background-size: 5px 5px;
  & > svg { display: block; }
`;
const SegmentSC = styled('div')`
  display: flex;
  margin: 3px 5px 0 6px;
  height: 20px;
  border: 1px solid #363636;
  border-radius: 3px;
`;
const SegButtonSC = styled('div')<{ $w: number; $active?: boolean }>`
  width: ${p => p.$w}px;
  display: flex;
  align-items: center;
  justify-content: center;
  gap: 5px;
  border-right: 1px solid #363636;
  color: ${p => (p.$active ? '#e2e2e2' : '#c0c0c0')};
  background: ${p => (p.$active ? '#5d82a8' : '#505050')};
`;
const SegDotSC = styled('span')<{ $round?: boolean; $soft?: boolean }>`
  width: 8px;
  height: 8px;
  border-radius: ${p => (p.$soft ? '3px' : p.$round ? '50%' : '1px')};
  background: #a8a8a8;
`;
const HoleFieldsSC = styled('div')`
  margin-top: 9px;
  display: flex;
  flex-direction: column;
  gap: 3px;
`;
const ToleranceSC = styled('div')`
  display: grid;
  grid-template-columns: 17px 25px 17px 1fr;
  height: 20px;
  & > div:nth-child(3) { margin-left: 3px; }
`;
const TolSignSC = styled('div')`
  display: flex;
  align-items: center;
  justify-content: center;
  color: #bbb;
  background: #4a4a4a;
  border-radius: 3px 0 0 3px;
`;
const TolValueSC = styled('div')`
  display: flex;
  align-items: center;
  justify-content: center;
  color: #c8c8c8;
  background: #2f2f2f;
  border-radius: 0 3px 3px 0;
`;
const PlatedSC = styled('div')`
  display: flex;
  align-items: center;
  gap: 5px;
  color: #a8a8a8;
`;
const SelectedCountSC = styled('div')`
  height: 12px;
  flex: none;
  margin: 2px 0 -2px 7px;
  line-height: 12px;
  font-size: 10px;
  color: #b0b0b0;
`;
const PanelTabsSC = styled('div')`
  display: flex;
  height: 19px;
  flex: none;
  padding-left: 1px;
`;
const PanelTabSC = styled('div')`
  padding: 0 6px;
  line-height: 17px;
  color: #bcbcbc;
  border: 1px solid #333;
`;
const PropArrowSC = styled('div')<{ $down?: boolean }>`
  position: absolute;
  left: 206px;
  top: ${p => (p.$down ? '804px' : '91px')};
  border-left: 3px solid transparent;
  border-right: 3px solid transparent;
  border-${p => (p.$down ? 'top' : 'bottom')}: 3px solid #7a7a7a;
`;
const PropScrollbarSC = styled('div')`
  position: absolute;
  left: 206px;
  top: 99px;
  width: 5px;
  height: 396px;
  border-radius: 3px;
  background: #5c5c5c;
`;

// ---- bottom ----
const StatusBarSC = styled('div')`
  flex: 1;
  display: flex;
  align-items: flex-end;
  color: #b4b4b4;
  background: #3f3f3f;
  border-top: 1px solid #383838;
`;
const StatusCellSC = styled('div')<{ $w: number }>`
  width: ${p => p.$w}px;
  height: 100%;
  display: flex;
  align-items: center;
  padding: 4px 0 0 5px;
  border-right: 1px solid #383838;
`;
const StatusTextSC = styled('span')<{ $w?: number }>`
  ${p => (p.$w ? `width: ${p.$w}px;` : '')}
  white-space: nowrap;
`;
const PanelsBtnSC = styled('div')`
  margin-left: auto;
  margin-right: 2px;
  width: 49px;
  height: 15px;
  text-align: center;
  line-height: 15px;
  color: #c0c0c0;
  background: #505050;
  border: 1px solid #333;
  border-radius: 2px;
`;
const ArrowSC = styled('svg')`
  position: absolute;
  left: 1240px;
  top: 228px;
`;
const SliverSC = styled('div')`
  position: absolute;
  left: 1611px;
  top: 820px;
  width: 6px;
  height: 58px;
  border-radius: 4px 0 0 4px;
  background: #f4f4f4;
`;
const WatermarkSC = styled('div')`
  position: absolute;
  left: 1482px;
  top: 877px;
  font-family: "Liberation Sans", sans-serif;
  font-size: 17.500px;
  letter-spacing: 0;
  color: rgba(255, 255, 255, 0.88);
  white-space: nowrap;
`;
